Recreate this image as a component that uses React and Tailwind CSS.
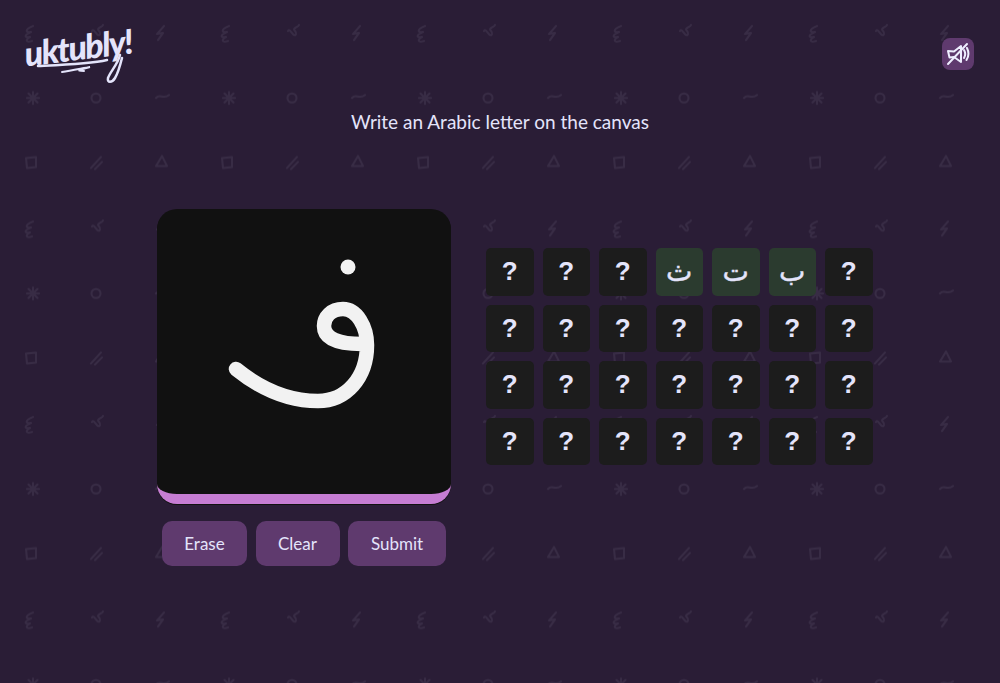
import React from "react";

const UI_FONT = "[font-family:Lato,'Noto_Sans',sans-serif]";

// 7 x 4 letter slots, only the found ones show their letter
const found = { 3: "ث", 4: "ت", 5: "ب" };
const slots = Array.from({ length: 28 }, (_, i) => found[i] || "?");

const BackgroundPattern = () => (
  <svg className="absolute inset-0 w-full h-full" aria-hidden="true">
    <defs>
      <pattern id="doodles" width="196" height="195.5" patternUnits="userSpaceOnUse">
        <g fill="none" stroke="#382c45" strokeWidth="2" strokeLinecap="round" strokeLinejoin="round">
          <path d="M33 26 C25 29 25 33 31 32 C24 35 24 38 30 37 C25 40 26 43 32 41" />
          <path d="M92 31 C94 27 98 39 100 34 C101 31 96 30 99 28 C101 27 103 26 103 25" />
          <path d="M164 26 L157 34 L163 33 L158 40" />
          <path d="M33 92 V104 M27 98 H39 M28.500 93.500 L37.500 102.500 M37.500 93.500 L28.500 102.500" />
          <circle cx="96" cy="98" r="4.500" />
          <path d="M156 98 C160 93 163 100 169 95" />
          <path d="M26 158 L36 157 L36 167 L27 168 Z" />
          <path d="M91 168 L101 157 M95 169 L102 162" />
          <path d="M156 166 L162 156 L167 166 Z" />
        </g>
      </pattern>
    </defs>
    <rect width="100%" height="100%" fill="url(#doodles)" />
  </svg>
);

const Logo = () => (
  <div className="relative w-[112px] h-[60px]">
    <span className="absolute left-0 top-0 -rotate-[7deg] italic font-black text-[34px] leading-[44px] tracking-[-1.500px] text-[#e4e4fb] [font-family:Lato,sans-serif] whitespace-nowrap">
      uktubly!
    </span>
    <svg className="absolute left-0 top-0" width="112" height="60" viewBox="24 25 112 60" fill="none" stroke="#e4e4fb" strokeLinecap="round">
      <path d="M38 66 C60 65 90 64 107 60" strokeWidth="2.500" />
      <path d="M62 72 C72 70 85 68 90 67 C82 69 74 71 84 71" strokeWidth="2" />
      <path d="M120 55 C118 64 110 72 108 78 C107 83 112 83 115 78 C118 73 120 66 122 58" strokeWidth="2.500" />
    </svg>
  </div>
);

const MuteIcon = () => (
  <svg width="24" height="24" viewBox="0 0 24 24" fill="none" stroke="#eeeeff" strokeWidth="2" strokeLinecap="round" strokeLinejoin="round">
    <path d="M2 9 L8 9.500 L15 4 L15 20 L8 15 L3.500 15.500 Z" />
    <path d="M2 22 L21 2" />
    <path d="M18 8 C19.500 10.500 19.500 13.500 18 16" />
    <path d="M21 6 C23 10 23 14 20.500 18" />
  </svg>
);

// the user's stroke, in page coordinates so it can be compared to the picture
const DrawnLetter = () => (
  <svg className="w-full h-full" viewBox="157 209 294 285" fill="none">
    <circle cx="348" cy="267" r="7.500" fill="#f2f2f2" />
    <path
      d="M236 369 C262 390 290 401 318 401 C346 401 367 378 367 345 C367 327 357 309 343 309 C331 309 324 317 324 326 C324 339 340 344 362 344"
      stroke="#f2f2f2"
      strokeWidth="14.500"
      strokeLinecap="round"
    />
  </svg>
);

const ACTIONS = [
  { label: "Erase", width: "w-[85px]" },
  { label: "Clear", width: "w-[84px]" },
  { label: "Submit", width: "w-[98px]" },
];

export default function App() {
  return (
    <div className={`relative w-full h-[683px] overflow-hidden bg-[#2a1d36] text-[#e4e4fb] ${UI_FONT}`}>
      <BackgroundPattern />

      <div className="relative">
        <header className="flex justify-between items-start pl-6 pr-[26px] pt-[25px] h-[100px]">
          <Logo />
          <button className="mt-[13px] w-8 h-8 flex items-center justify-center rounded-lg bg-[#5f3a6e]">
            <MuteIcon />
          </button>
        </header>

        <h1 className="text-center text-[19px] leading-[44px] font-normal">
          Write an Arabic letter on the canvas
        </h1>

        <main className="flex gap-[35px] pl-[157px] mt-[65px]">
          <div className="w-[294px]">
            <div className="h-[295px] rounded-[20px] bg-[#111111] border-b-[10px] border-[#c67dd3] shadow-[0_1px_0_#111111] overflow-hidden">
              <DrawnLetter />
            </div>
            <div className="flex gap-[8.500px] pl-[5px] mt-[17px]">
              {ACTIONS.map((action) => (
                <button
                  key={action.label}
                  className={`${action.width} h-[45px] rounded-[10px] bg-[#5f3a6e] text-[17px]`}
                >
                  {action.label}
                </button>
              ))}
            </div>
          </div>

          <div className="grid grid-cols-[repeat(7,47.5px)] auto-rows-[47.5px] gap-[9px] mt-[39px] h-fit">
            {slots.map((letter, i) => (
              <div
                key={i}
                className={`flex items-center justify-center rounded-[5px] ${
                  letter === "?"
                    ? "bg-[#1c1c1c] text-[26px] font-bold [font-family:'Liberation_Sans',sans-serif]"
                    : "bg-[#2b3b2f] text-[28px] font-normal [-webkit-text-stroke:0.4px_#e4e4fb] [font-family:'DejaVu_Sans',sans-serif]"
                }`}
              >
                {letter}
              </div>
            ))}
          </div>
        </main>
      </div>
    </div>
  );
}
